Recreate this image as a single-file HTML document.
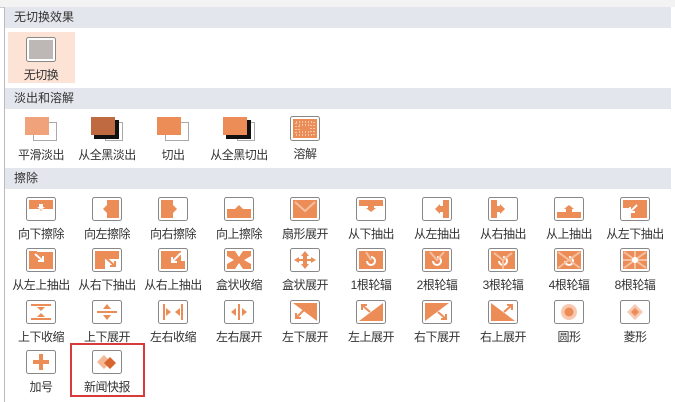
<!DOCTYPE html>
<html><head><meta charset="utf-8"><style>
body{margin:0;width:675px;height:402px;overflow:hidden;background:#fff;font-family:"Liberation Sans","Noto Sans CJK SC",sans-serif;font-size:12px;color:#333;position:relative}
.bgtop{position:absolute;left:0;top:0;width:675px;height:7px;background:#f3f3f3;border-bottom:1px solid #ccc}
.panel{position:absolute;left:4px;top:7px;width:671px;height:395px;background:#fff;border-left:1px solid #bbb}
.h{position:absolute;left:5px;width:666px;height:21px;background:#e4e6ee;line-height:21px;padding-left:9px;box-sizing:border-box;font-size:12px;color:#333}
.it{position:absolute;width:66px;text-align:center}
.it svg{display:block;margin:0 auto}
.it span{display:block;margin-top:4px;white-space:nowrap;font-size:12px;letter-spacing:-0.5px}
</style></head><body>
<div class="bgtop"></div>
<div class="panel"></div>
<div class="h" style="top:7px">无切换效果</div>
<div class="h" style="top:88px">淡出和溶解</div>
<div class="h" style="top:168px">擦除</div>
<div style="position:absolute;left:8px;top:32px;width:67px;height:51px;background:#fde3d6"></div>
<div class="it" style="left:8px;top:37px"><svg width="30" height="25"><rect x="0.5" y="0.5" width="29" height="24" rx="2" fill="#fff" stroke="#888"/><rect x="3" y="3" width="24" height="19" fill="#bdb8b6"/></svg><span>无切换</span></div>

<div class="it" style="left:8px;top:116px"><svg width="34" height="26"><rect x="9.5" y="6.5" width="23" height="18" fill="#fff" stroke="#aaa"/><rect x="1" y="1" width="24" height="18" fill="#f0a27a"/></svg><span>平滑淡出</span></div>
<div class="it" style="left:74px;top:116px"><svg width="34" height="26"><rect x="15.5" y="6.5" width="17" height="18" fill="#fff" stroke="#aaa"/><rect x="4" y="4" width="25" height="19" fill="#111"/><rect x="1" y="1" width="24" height="18" fill="#c06a42"/></svg><span>从全黑淡出</span></div>
<div class="it" style="left:140px;top:116px"><svg width="34" height="26"><rect x="9.5" y="6.5" width="23" height="18" fill="#fff" stroke="#aaa"/><rect x="1" y="1" width="24" height="18" fill="#ec8c56"/></svg><span>切出</span></div>
<div class="it" style="left:206px;top:116px"><svg width="34" height="26"><rect x="15.5" y="6.5" width="17" height="18" fill="#fff" stroke="#aaa"/><rect x="4" y="4" width="25" height="19" fill="#111"/><rect x="1" y="1" width="24" height="18" fill="#ec8c56"/></svg><span>从全黑切出</span></div>
<div class="it" style="left:272px;top:116px"><svg width="30" height="25"><rect x="0.5" y="0.5" width="29" height="24" rx="2" fill="#fff" stroke="#888"/><rect x="3" y="3" width="24" height="19" fill="#ec8c56"/><g fill="#fde"><rect x="6" y="6" width="18" height="13" fill="none" stroke="#fff" stroke-dasharray="1 2" stroke-width="1"/><rect x="9" y="9" width="12" height="7" fill="none" stroke="#fff" stroke-dasharray="1 2"/></g></svg><span>溶解</span></div>

<!-- row 1 -->
<div class="it" style="left:8px;top:197px"><svg width="30" height="24"><rect x="0.5" y="0.5" width="29" height="23" rx="2" fill="#fff" stroke="#888"/><rect x="3" y="3" width="24" height="9" fill="#ec8c56"/><path d="M11 9h8l-4 5z" fill="#ec8c56"/><path d="M13 7h4v3h2l-4 3-4-3h2z" fill="#fff"/></svg><span>向下擦除</span></div>
<div class="it" style="left:74px;top:197px"><svg width="30" height="24"><rect x="0.5" y="0.5" width="29" height="23" rx="2" fill="#fff" stroke="#888"/><rect x="15" y="3" width="12" height="18" fill="#ec8c56"/><path d="M11 12l5-5v10z" fill="#ec8c56"/></svg><span>向左擦除</span></div>
<div class="it" style="left:140px;top:197px"><svg width="30" height="24"><rect x="0.5" y="0.5" width="29" height="23" rx="2" fill="#fff" stroke="#888"/><rect x="3" y="3" width="12" height="18" fill="#ec8c56"/><path d="M19 12l-5-5v10z" fill="#ec8c56"/></svg><span>向右擦除</span></div>
<div class="it" style="left:206px;top:197px"><svg width="30" height="24"><rect x="0.5" y="0.5" width="29" height="23" rx="2" fill="#fff" stroke="#888"/><rect x="3" y="12" width="24" height="9" fill="#ec8c56"/><path d="M10 13l5-5 5 5z" fill="#ec8c56"/></svg><span>向上擦除</span></div>
<div class="it" style="left:272px;top:197px"><svg width="30" height="24"><rect x="0.5" y="0.5" width="29" height="23" rx="2" fill="#fff" stroke="#888"/><rect x="3" y="3" width="24" height="18" fill="#ec8c56"/><path d="M5 5l10 9 10-9" stroke="#f6c0a0" stroke-width="2" fill="none"/></svg><span>扇形展开</span></div>
<div class="it" style="left:338px;top:197px"><svg width="30" height="24"><rect x="0.5" y="0.5" width="29" height="23" rx="2" fill="#fff" stroke="#888"/><rect x="3" y="3" width="24" height="6" fill="#ec8c56"/><path d="M12 8h6v3h2l-5 4-5-4h2z" fill="#ec8c56"/></svg><span>从下抽出</span></div>
<div class="it" style="left:404px;top:197px"><svg width="30" height="24"><rect x="0.5" y="0.5" width="29" height="23" rx="2" fill="#fff" stroke="#888"/><rect x="21" y="3" width="6" height="18" fill="#ec8c56"/><path d="M22 9v6h-4v2l-5-5 5-5v2z" fill="#ec8c56"/></svg><span>从左抽出</span></div>
<div class="it" style="left:470px;top:197px"><svg width="30" height="24"><rect x="0.5" y="0.5" width="29" height="23" rx="2" fill="#fff" stroke="#888"/><rect x="3" y="3" width="6" height="18" fill="#ec8c56"/><path d="M8 9v6h4v2l5-5-5-5v2z" fill="#ec8c56"/></svg><span>从右抽出</span></div>
<div class="it" style="left:536px;top:197px"><svg width="30" height="24"><rect x="0.5" y="0.5" width="29" height="23" rx="2" fill="#fff" stroke="#888"/><rect x="3" y="15" width="24" height="6" fill="#ec8c56"/><path d="M12 16v-4h-2l5-4 5 4h-2v4z" fill="#ec8c56"/></svg><span>从上抽出</span></div>
<div class="it" style="left:602px;top:197px"><svg width="30" height="24"><rect x="0.5" y="0.5" width="29" height="23" rx="2" fill="#fff" stroke="#888"/><path d="M3 3h24v18h-16v-10h-8z" fill="#ec8c56"/><path d="M17 8l-7 7m0-5v5h5" stroke="#fff" stroke-width="2" fill="none"/></svg><span>从左下抽出</span></div>
<!-- row 2 -->
<div class="it" style="left:8px;top:248px"><svg width="30" height="24"><rect x="0.5" y="0.5" width="29" height="23" rx="2" fill="#fff" stroke="#888"/><path d="M3 3h8v10h16v8h-24z" fill="#ec8c56"/><rect x="9" y="4" width="18" height="14" fill="#ec8c56"/><path d="M9 6l8 7m0-5v5h-5" stroke="#fff" stroke-width="2" fill="none"/></svg><span>从左上抽出</span></div>
<div class="it" style="left:74px;top:248px"><svg width="30" height="24"><rect x="0.5" y="0.5" width="29" height="23" rx="2" fill="#fff" stroke="#888"/><path d="M3 3h24v8h-14v10h-10z" fill="#ec8c56"/><path d="M14 10l9 8m0-5v5h-5" stroke="#ec8c56" stroke-width="2" fill="none"/></svg><span>从右下抽出</span></div>
<div class="it" style="left:140px;top:248px"><svg width="30" height="24"><rect x="0.5" y="0.5" width="29" height="23" rx="2" fill="#fff" stroke="#888"/><path d="M3 3h10v10h14v8h-24z" fill="#ec8c56"/><rect x="3" y="3" width="20" height="16" fill="#ec8c56"/><path d="M23 5l-9 9m0-5v5h5" stroke="#fff" stroke-width="2" fill="none"/></svg><span>从右上抽出</span></div>
<div class="it" style="left:206px;top:248px"><svg width="30" height="24"><rect x="0.5" y="0.5" width="29" height="23" rx="2" fill="#fff" stroke="#888"/><rect x="3" y="3" width="24" height="18" fill="#ec8c56"/><path d="M11 3h8l-4 6zM11 21h8l-4-6zM3 8v8l7-4zM27 8v8l-7-4z" fill="#fff"/></svg><span>盒状收缩</span></div>
<div class="it" style="left:272px;top:248px"><svg width="30" height="24"><rect x="0.5" y="0.5" width="29" height="23" rx="2" fill="#fff" stroke="#888"/><path d="M15 3l4 5h-2v3h4v-2l5 3-5 3v-2h-4v3h2l-4 5-4-5h2v-3h-4v2l-5-3 5-3v2h4v-3h-2z" fill="#ec8c56"/></svg><span>盒状展开</span></div>
<g></g>
<div class="it" style="left:338px;top:248px"><svg width="30" height="24"><rect x="0.5" y="0.5" width="29" height="23" rx="2" fill="#fff" stroke="#888"/><rect x="3" y="3" width="24" height="18" fill="#ec8c56"/><path d="M15 9a4 4 0 1 1-4 4" stroke="#fff" stroke-width="2" fill="none"/><path d="M10 4l5 8" stroke="#f6c0a0" stroke-width="2"/></svg><span>1根轮辐</span></div>
<div class="it" style="left:404px;top:248px"><svg width="30" height="24"><rect x="0.5" y="0.5" width="29" height="23" rx="2" fill="#fff" stroke="#888"/><rect x="3" y="3" width="24" height="18" fill="#ec8c56"/><path d="M15 9a4 4 0 1 1-4 4" stroke="#fff" stroke-width="2" fill="none"/><path d="M8 4l7 8 7-8" stroke="#f6c0a0" stroke-width="2" fill="none"/></svg><span>2根轮辐</span></div>
<div class="it" style="left:470px;top:248px"><svg width="30" height="24"><rect x="0.5" y="0.5" width="29" height="23" rx="2" fill="#fff" stroke="#888"/><rect x="3" y="3" width="24" height="18" fill="#ec8c56"/><path d="M15 9a4 4 0 1 1-4 4" stroke="#fff" stroke-width="2" fill="none"/><path d="M6 5l9 7 9-7M15 12v9" stroke="#f6c0a0" stroke-width="2" fill="none"/></svg><span>3根轮辐</span></div>
<div class="it" style="left:536px;top:248px"><svg width="30" height="24"><rect x="0.5" y="0.5" width="29" height="23" rx="2" fill="#fff" stroke="#888"/><rect x="3" y="3" width="24" height="18" fill="#ec8c56"/><path d="M15 9a4 4 0 1 1-4 4" stroke="#fff" stroke-width="2" fill="none"/><path d="M4 4l22 16M26 4l-22 16" stroke="#f6c0a0" stroke-width="2" fill="none"/></svg><span>4根轮辐</span></div>
<div class="it" style="left:602px;top:248px"><svg width="30" height="24"><rect x="0.5" y="0.5" width="29" height="23" rx="2" fill="#fff" stroke="#888"/><rect x="3" y="3" width="24" height="18" fill="#ec8c56"/><path d="M4 4l22 16M26 4l-22 16M15 3v18M3 12h24" stroke="#f6c0a0" stroke-width="2" fill="none"/><circle cx="15" cy="12" r="3" fill="#fff"/></svg><span>8根轮辐</span></div>
<!-- row 3 -->
<div class="it" style="left:8px;top:300px"><svg width="30" height="24"><rect x="0.5" y="0.5" width="29" height="23" rx="2" fill="#fff" stroke="#888"/><path d="M5 5h20M5 19h20" stroke="#ec8c56" stroke-width="2"/><path d="M11 7h8l-4 4zM11 17h8l-4-4z" fill="#ec8c56"/></svg><span>上下收缩</span></div>
<div class="it" style="left:74px;top:300px"><svg width="30" height="24"><rect x="0.5" y="0.5" width="29" height="23" rx="2" fill="#fff" stroke="#888"/><path d="M5 12h20" stroke="#ec8c56" stroke-width="2"/><path d="M11 9h8l-4-5zM11 15h8l-4 5z" fill="#ec8c56"/></svg><span>上下展开</span></div>
<div class="it" style="left:140px;top:300px"><svg width="30" height="24"><rect x="0.5" y="0.5" width="29" height="23" rx="2" fill="#fff" stroke="#888"/><path d="M6 4v16M24 4v16" stroke="#ec8c56" stroke-width="2"/><path d="M8 8v8l5-4zM22 8v8l-5-4z" fill="#ec8c56"/></svg><span>左右收缩</span></div>
<div class="it" style="left:206px;top:300px"><svg width="30" height="24"><rect x="0.5" y="0.5" width="29" height="23" rx="2" fill="#fff" stroke="#888"/><path d="M15 4v16" stroke="#ec8c56" stroke-width="2"/><path d="M12 8v8l-5-4zM18 8v8l5-4z" fill="#ec8c56"/></svg><span>左右展开</span></div>
<div class="it" style="left:272px;top:300px"><svg width="30" height="24"><rect x="0.5" y="0.5" width="29" height="23" rx="2" fill="#fff" stroke="#888"/><path d="M3 3h24v18z" fill="#ec8c56"/><path d="M14 10l-8 8m0-5v5h5" stroke="#ec8c56" stroke-width="2" fill="none"/></svg><span>左下展开</span></div>
<div class="it" style="left:338px;top:300px"><svg width="30" height="24"><rect x="0.5" y="0.5" width="29" height="23" rx="2" fill="#fff" stroke="#888"/><path d="M27 3v18h-24z" fill="#ec8c56"/><path d="M14 12l-8-7m0 5v-5h5" stroke="#ec8c56" stroke-width="2" fill="none"/></svg><span>左上展开</span></div>
<div class="it" style="left:404px;top:300px"><svg width="30" height="24"><rect x="0.5" y="0.5" width="29" height="23" rx="2" fill="#fff" stroke="#888"/><path d="M3 3h24l-24 18z" fill="#ec8c56"/><path d="M16 12l8 7m0-5v5h-5" stroke="#ec8c56" stroke-width="2" fill="none"/></svg><span>右下展开</span></div>
<div class="it" style="left:470px;top:300px"><svg width="30" height="24"><rect x="0.5" y="0.5" width="29" height="23" rx="2" fill="#fff" stroke="#888"/><path d="M3 3v18h24z" fill="#ec8c56"/><path d="M16 12l8-7m-5 0h5v5" stroke="#ec8c56" stroke-width="2" fill="none"/></svg><span>右上展开</span></div>
<div class="it" style="left:536px;top:300px"><svg width="30" height="24"><rect x="0.5" y="0.5" width="29" height="23" rx="2" fill="#fff" stroke="#888"/><circle cx="15" cy="12" r="8" fill="#f8c9b0"/><circle cx="15" cy="12" r="4.5" fill="#ec8c56"/></svg><span>圆形</span></div>
<div class="it" style="left:602px;top:300px"><svg width="30" height="24"><rect x="0.5" y="0.5" width="29" height="23" rx="2" fill="#fff" stroke="#888"/><path d="M15 4l8 8-8 8-8-8z" fill="#f8c9b0"/><path d="M15 8l4 4-4 4-4-4z" fill="#ec8c56"/></svg><span>菱形</span></div>
<!-- row 4 -->
<div class="it" style="left:8px;top:350px"><svg width="30" height="24"><rect x="0.5" y="0.5" width="29" height="23" rx="2" fill="#fff" stroke="#888"/><path d="M13 4h4v6h6v4h-6v6h-4v-6h-6v-4h6z" fill="#ec8c56"/></svg><span>加号</span></div>
<div class="it" style="left:74px;top:350px"><svg width="30" height="24"><rect x="0.5" y="0.5" width="29" height="23" rx="2" fill="#fff" stroke="#888"/><path d="M12 5l7 7-7 7-7-7z" fill="#f5b896"/><path d="M18 7l6 6-6 6-6-6z" fill="#d9662e"/></svg><span>新闻快报</span></div>
<div style="position:absolute;left:70px;top:343px;width:71px;height:50px;border:2px solid #d93a3a"></div>
</body></html>
